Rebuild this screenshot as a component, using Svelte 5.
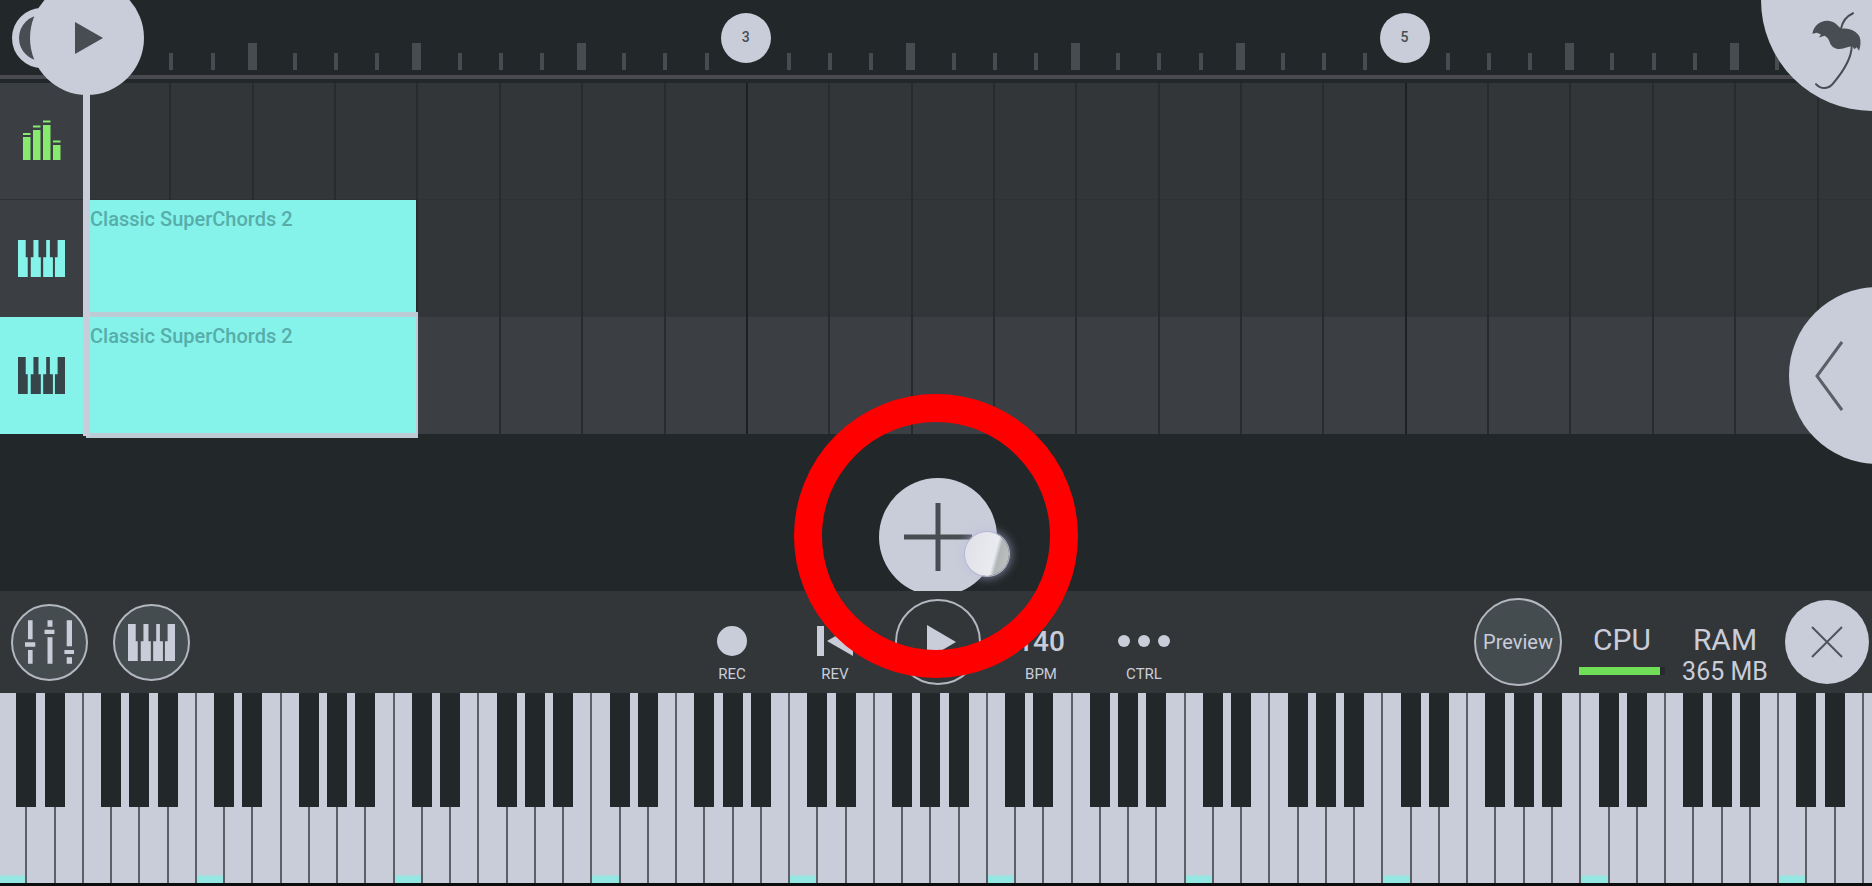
<script>
    let ticks = Array.from({ length: 43 }, (_, i) => i);
    let cells = Array.from({ length: 22 }, (_, i) => i);
    let octaves = Array.from({ length: 10 }, (_, i) => i);
    let notes = [
        { name: 'C', sharp: true },
        { name: 'D', sharp: true },
        { name: 'E', sharp: false },
        { name: 'F', sharp: true },
        { name: 'G', sharp: true },
        { name: 'A', sharp: true },
        { name: 'B', sharp: false },
    ];
    let tracks = [
        { name: 'Master', kind: 'meter', clip: '' },
        { name: 'Keys 1', kind: 'keys', clip: 'Classic SuperChords 2' },
        { name: 'Keys 2', kind: 'keys', clip: 'Classic SuperChords 2' },
    ];
    let bars = { 16: 3, 32: 5 };
    let selected = 2;
    let cpu = 94;
</script>

{#snippet keysIcon()}
    <svg class="keys-icon" viewBox="0 0 140 110" aria-hidden="true">
        <path d="M0 0H23V51H29V110H0ZM46 0H61V51H68V110H38V51H46ZM84 0H95V51H104V110H75V51H84ZM118 0H140V110H110V51H118Z" />
    </svg>
{/snippet}

<main>
    <header class="ruler">
        {#each ticks as i}
            <div class="tick-cell">
                {#if bars[i]}
                    <span class="bar-number">{bars[i]}</span>
                {:else}
                    <span class="tick" class:beat={i % 4 === 0}></span>
                {/if}
            </div>
        {/each}
    </header>

    <section class="tracks">
        {#each tracks as track, t}
            <div class="track" class:selected={t === selected}>
                <button class="track-head" aria-label={track.name}>
                    {#if track.kind === 'meter'}
                        <svg class="meter-icon" viewBox="0 0 38 40" aria-hidden="true">
                            <path d="M0 17H7.500V40H0ZM10 10H17.500V40H10ZM20 5H27.500V40H20ZM30 25H37.500V40H30Z" />
                            <path d="M0 13H7.500V15H0ZM10 5.500H17.500V7.500H10ZM20 0.500H27.500V2.500H20ZM30 20.500H37.500V22.500H30Z" />
                        </svg>
                    {:else}
                        {@render keysIcon()}
                    {/if}
                </button>
                <div class="lane">
                    {#each cells as c}
                        <div class="cell" class:bar={c === 8 || c === 16}></div>
                    {/each}
                    {#if track.clip}
                        <button class="clip">{track.clip}</button>
                    {/if}
                </div>
            </div>
        {/each}
        <div class="playhead"></div>
    </section>

    <section class="empty">
        <button class="add" aria-label="Add track">
            <svg viewBox="0 0 68 68" aria-hidden="true"><path d="M34 0V68M0 34H68" /></svg>
        </button>
        <span class="touch"></span>
        <span class="ring"></span>
    </section>

    <section class="toolbar">
        <div class="group">
            <button class="round" aria-label="Mixer">
                <svg class="mixer-icon" viewBox="39 48 148 132" aria-hidden="true">
                    <path d="M48 48H62V106H48ZM39 115H70V128H39ZM48 138H62V180H48ZM107 48H122V68H107ZM98 77H128V90H98ZM107 100H122V180H107ZM165 48H181V127H165ZM158 138H187V150H158ZM165 160H181V180H165Z" />
                </svg>
            </button>
            <button class="round" aria-label="Keyboard">{@render keysIcon()}</button>
        </div>

        <div class="transport">
            <button class="action">
                <span class="symbol"><svg viewBox="0 0 30 30" width="30" height="30"><circle cx="15" cy="15" r="15" /></svg></span>
                <span class="caption">REC</span>
            </button>
            <button class="action">
                <span class="symbol"><svg viewBox="0 0 36 30" width="36" height="30"><path d="M0 0H7V30H0ZM36 0V30L10 15Z" /></svg></span>
                <span class="caption">REV</span>
            </button>
            <button class="play" aria-label="Play">
                <svg viewBox="0 0 29 34" width="29" height="34"><path d="M0 0L29 17L0 34Z" /></svg>
            </button>
            <button class="action">
                <span class="symbol tempo">140</span>
                <span class="caption">BPM</span>
            </button>
            <button class="action">
                <span class="symbol"><svg viewBox="0 0 52 12" width="52" height="12"><circle cx="6" cy="6" r="6" /><circle cx="26" cy="6" r="6" /><circle cx="46" cy="6" r="6" /></svg></span>
                <span class="caption">CTRL</span>
            </button>
        </div>

        <div class="status">
            <button class="preview">Preview</button>
            <div class="stat">
                <span class="stat-name">CPU</span>
                <div class="load"><div class="load-fill" style="width: {cpu}%"></div></div>
            </div>
            <div class="stat">
                <span class="stat-name">RAM</span>
                <span class="stat-value">365 MB</span>
            </div>
            <button class="close" aria-label="Close">
                <svg viewBox="0 0 32 32" width="32" height="32"><path d="M1 1L31 31M31 1L1 31" /></svg>
            </button>
        </div>
    </section>

    <section class="keyboard">
        {#each octaves as o}
            <div class="octave">
                {#each notes as note}
                    <div class="key">
                        <button class="white" class:root={note.name === 'C'} aria-label="{note.name}{o}"></button>
                        {#if note.sharp}
                            <button class="black" aria-label="{note.name}#{o}"></button>
                        {/if}
                    </div>
                {/each}
            </div>
        {/each}
    </section>

    <span class="loop-handle"></span>
    <button class="play-handle" aria-label="Play position">
        <svg viewBox="0 0 28 32" width="28" height="32"><path d="M0 0L28 16L0 32Z" /></svg>
    </button>
    <button class="menu" aria-label="Menu">
        <svg viewBox="510 28 154 240" width="51" height="80" aria-hidden="true">
            <path class="crown" d="M514 96C519 70 540 55 562 57C580 59 590 70 600 81C628 77 649 89 657 106C661 118 660 134 655 147L648 137L641 143L635 134C625 133 613 142 596 142C580 142 569 132 566 120C563 111 558 105 551 102L534 107L540 98L528 93Z" />
            <path class="stem" d="M600 82C604 62 617 43 637 34M633 134C632 172 604 213 580 242C563 266 540 264 525 248" />
        </svg>
    </button>
    <button class="drawer" aria-label="Open panel">
        <svg viewBox="0 0 28 72" width="28" height="72"><path d="M27 2L2 36L27 70" /></svg>
    </button>
</main>

<style>
    :global(body) {
        background: #22272a;
    }

    main {
        --light: #c9cdd9;
        --dark: #22272a;
        --panel: #323639;
        --raised: #3b3e43;
        --ink: #474d52;
        --cyan: #86f3ea;
        position: relative;
        display: flex;
        flex-direction: column;
        min-height: 100vh;
        overflow: hidden;
        background: var(--dark);
        color: var(--light);
        font-family: Roboto, "Liberation Sans", sans-serif;
    }

    button {
        margin: 0;
        padding: 0;
        border: none;
        background: none;
        color: inherit;
        font: inherit;
        cursor: pointer;
    }

    svg {
        display: block;
        fill: currentColor;
    }

    /* timeline */
    .ruler {
        display: flex;
        box-sizing: border-box;
        height: 79px;
        margin-bottom: 4px;
        padding-left: 83px;
        border-bottom: 4px solid #484a4f;
    }

    .tick-cell {
        display: flex;
        flex: 0 0 2.2vw;
        align-items: flex-end;
        padding-bottom: 5px;
    }

    .tick {
        width: 4px;
        height: 17px;
        margin-left: 4px;
        background: #474c50;
    }

    .beat {
        width: 9px;
        height: 27px;
        margin-left: 0;
    }

    .bar-number {
        flex: 0 0 50px;
        height: 50px;
        margin: 0 0 7px -21px;
        border-radius: 50%;
        background: var(--light);
        color: var(--ink);
        font-size: 14px;
        font-weight: 500;
        line-height: 48px;
        text-align: center;
    }

    /* tracks */
    .tracks {
        position: relative;
    }

    .track {
        display: flex;
        height: 117px;
        background: var(--panel);
    }

    .track-head {
        display: flex;
        flex: 0 0 83px;
        align-items: center;
        justify-content: center;
        background: var(--raised);
        color: var(--cyan);
    }

    .track:first-child .track-head,
    .track:first-child .lane {
        box-shadow: inset 0 -1px #2d3134;
    }

    .selected {
        background: var(--raised);
    }

    .selected .track-head {
        background: var(--cyan);
        color: #36454a;
    }

    .meter-icon {
        width: 38px;
        height: 40px;
        margin-bottom: 3px;
        color: #88e96f;
    }

    .keys-icon {
        width: 47px;
        height: 37px;
    }

    .lane {
        position: relative;
        display: flex;
        flex: 1;
        min-width: 0;
        padding-left: 4px;
    }

    .cell {
        box-sizing: border-box;
        flex: 0 0 4.4vw;
        border-left: 2px solid #272b2e;
    }

    .cell.bar {
        border-left: 2px solid #1c2023;
    }

    .clip {
        position: absolute;
        top: 0;
        bottom: 0;
        left: 4px;
        display: flex;
        box-sizing: border-box;
        width: 17.6vw;
        padding: 7px 3px;
        background: var(--cyan);
        color: #57adaa;
        font-size: 20px;
        font-weight: 500;
        line-height: 24px;
    }

    .selected .clip {
        top: -5px;
        bottom: -4px;
        left: 3px;
        width: calc(17.6vw + 3px);
        padding: 7px 2px;
        border: solid #bccbd6;
        border-width: 5px 2px;
    }

    .playhead {
        position: absolute;
        top: 0;
        bottom: -2px;
        left: 83px;
        width: 7px;
        background: var(--light);
    }

    .empty {
        position: relative;
        display: flex;
        flex: 1;
        align-items: flex-start;
        justify-content: center;
        min-height: 157px;
        padding-left: 4px;
    }

    /* the lower edge slides under the toolbar */
    .add {
        display: flex;
        align-items: center;
        justify-content: center;
        width: 118px;
        height: 118px;
        margin: 44px 0 -5px;
        border-radius: 50%;
        background: var(--light);
        color: var(--ink);
    }

    .add svg {
        width: 68px;
        height: 68px;
        stroke: currentColor;
        stroke-width: 5;
    }

    .touch {
        position: absolute;
        top: 98px;
        left: calc(50% + 29px);
        width: 44px;
        height: 44px;
        border-radius: 50%;
        background: linear-gradient(105deg, #dfe1e8, #e9ebf0 64%, #b2b5b6 72%, #c3c5c6);
        box-shadow: 0 0 0 1px #b6b6d2, 0 0 10px 2px rgba(190, 188, 225, 0.6);
    }

    .ring {
        position: absolute;
        z-index: 2;
        top: -40px;
        left: calc(50% - 142px);
        box-sizing: border-box;
        width: 284px;
        height: 284px;
        border: 28px solid #f00;
        border-radius: 50%;
        pointer-events: none;
    }

    /* toolbar */
    .toolbar {
        position: relative;
        z-index: 1;
        display: grid;
        grid-template-columns: 1fr auto 1fr;
        align-items: center;
        height: 102px;
        padding: 0 3px 0 7px;
        background: var(--panel);
    }

    .group {
        display: flex;
        gap: 25px;
        padding-left: 4px;
    }

    .round,
    .play,
    .preview,
    .close {
        display: flex;
        box-sizing: border-box;
        align-items: center;
        justify-content: center;
        border-radius: 50%;
    }

    .round {
        width: 77px;
        height: 77px;
        border: 2px solid #b3b7bf;
        background: #454c50;
    }

    .mixer-icon {
        width: 49px;
        height: 44px;
    }

    .transport {
        display: grid;
        grid-template-columns: repeat(5, 103px);
        align-items: center;
        justify-items: center;
    }

    .action {
        display: flex;
        flex-direction: column;
        align-items: center;
        width: 80px;
        padding-top: 20px;
    }

    .symbol {
        display: flex;
        align-items: center;
        height: 40px;
    }

    .tempo {
        font-size: 28px;
        font-weight: 500;
    }

    .caption {
        margin-top: 4px;
        font-size: 15px;
        line-height: 18px;
    }

    .play {
        width: 86px;
        height: 86px;
        border: 2px solid #b3b7bf;
    }

    .play svg {
        margin-left: 6px;
    }

    .status {
        display: flex;
        align-items: center;
        justify-content: flex-end;
        gap: 17px;
    }

    .preview {
        width: 88px;
        height: 88px;
        border: 2px solid #b3b7bf;
        background: #454c50;
        font-size: 20px;
    }

    .stat {
        display: flex;
        flex-direction: column;
        align-items: center;
        width: 86px;
        height: 88px;
    }

    .stat-name {
        padding-top: 27px;
        font-size: 30px;
        line-height: 30px;
    }

    .stat-value {
        margin-top: 3px;
        font-size: 25px;
        line-height: 28px;
    }

    .load {
        align-self: stretch;
        height: 8px;
        margin-top: 12px;
        background: #252a2c;
    }

    .load-fill {
        height: 100%;
        background: #70df57;
    }

    .close {
        width: 84px;
        height: 84px;
        background: var(--light);
        color: #50555d;
    }

    .close svg {
        fill: none;
        stroke: currentColor;
        stroke-width: 2;
    }

    /* keyboard */
    .keyboard {
        display: flex;
        height: 190px;
        margin-left: -3px;
        border-bottom: 3px solid #0b0d0e;
        background: var(--light);
    }

    .octave {
        display: flex;
        flex: 0 0 10.566vw;
    }

    .key {
        position: relative;
        flex: 1;
    }

    .white {
        display: block;
        box-sizing: border-box;
        width: 100%;
        height: 100%;
        border-left: 2px solid #5c6066;
        background: var(--light);
    }

    .root {
        background: linear-gradient(transparent 181px, #93e8e4 184px) var(--light);
    }

    .black {
        position: absolute;
        z-index: 1;
        top: 0;
        right: -11px;
        width: 20px;
        height: 114px;
        background: var(--dark);
    }

    /* floating handles */
    .loop-handle {
        position: absolute;
        top: 8px;
        left: 12px;
        box-sizing: border-box;
        width: 60px;
        height: 60px;
        border: 7px solid var(--light);
        border-radius: 50%;
        background: var(--ink);
    }

    .play-handle,
    .menu,
    .drawer {
        position: absolute;
        border-radius: 50%;
        background: var(--light);
        color: var(--ink);
    }

    .play-handle {
        top: -19px;
        left: 30px;
        width: 114px;
        height: 114px;
    }

    .play-handle svg {
        margin-left: 45px;
    }

    .menu {
        top: -111px;
        right: -111px;
        width: 222px;
        height: 222px;
    }

    .menu svg {
        margin: 101px 0 0 50px;
    }

    .stem {
        fill: none;
        stroke: currentColor;
        stroke-width: 6;
        stroke-linecap: round;
    }

    .drawer {
        top: 287px;
        right: -94px;
        width: 177px;
        height: 177px;
        color: #5b5f68;
    }

    .drawer svg {
        margin-left: 26px;
        fill: none;
        stroke: currentColor;
        stroke-width: 3;
    }
</style>
